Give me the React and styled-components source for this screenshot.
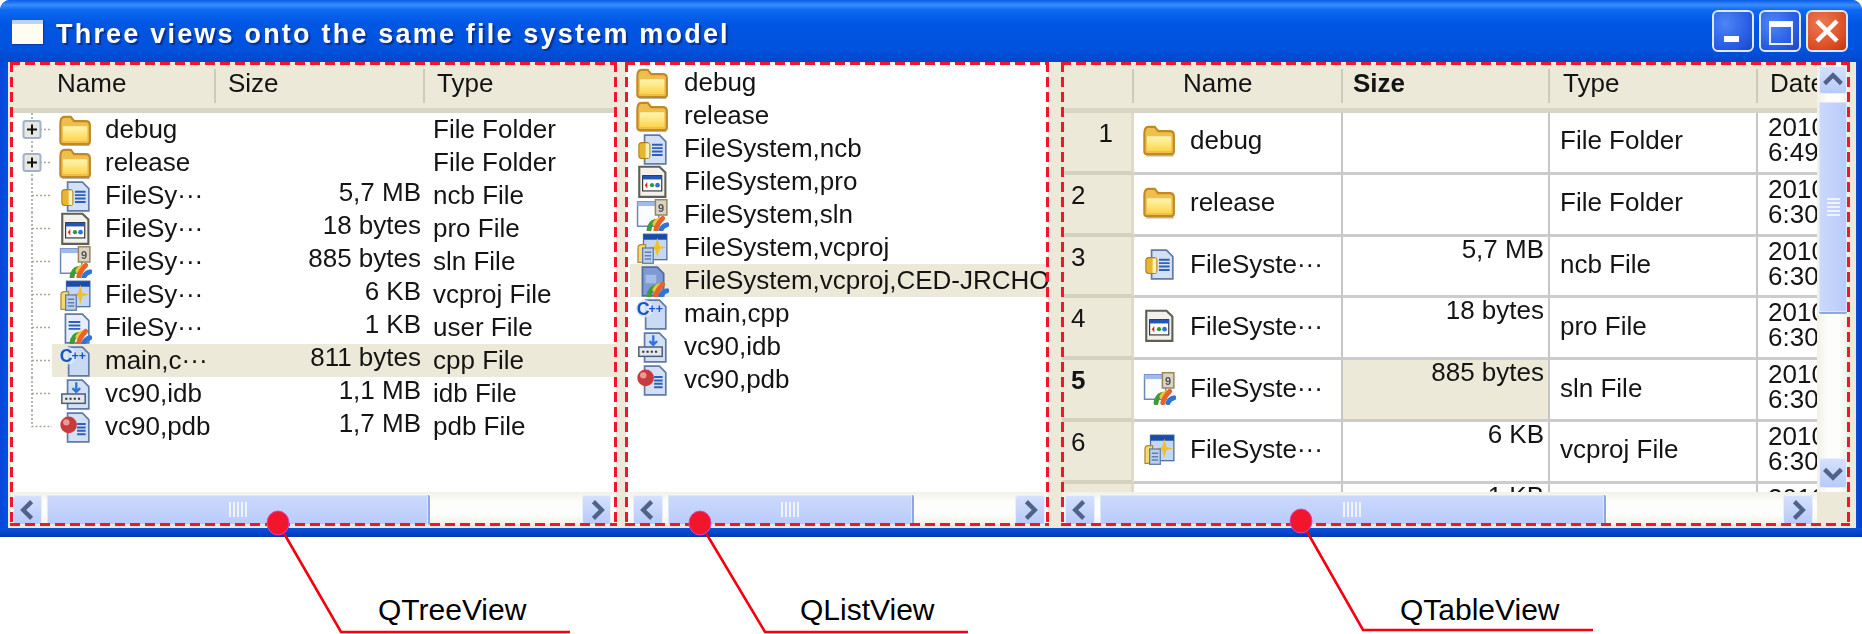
import React from "react"
import styled, { createGlobalStyle } from "styled-components"

const GlobalStyle = createGlobalStyle`
  html, body {
    margin: 0;
    background: #fff;
    overflow: hidden;
  }
  * {
    box-sizing: border-box;
  }
`

const Page = styled.div`
  position: relative;
  width: 1862px;
  height: 634px;
  font-family: "Liberation Sans", Arial, sans-serif;
  color: #141414;
`

const Window = styled.div`
  height: 537px;
  display: flex;
  flex-direction: column;
  border-radius: 10px 10px 0 0;
  background: linear-gradient(90deg, #0a45d8 0, #0050e6 6px, #0055e5 99.5%, #0a3fc8 100%);
  filter: blur(0.55px);
  overflow: hidden;
`

const TitleBar = styled.div`
  height: 62px;
  flex: none;
  display: flex;
  align-items: center;
  padding: 6px 14px 0 12px;
  background: linear-gradient(
    180deg,
    #0a5ce8 0,
    #3b8dff 5px,
    #0d68f2 10px,
    #0056e2 24px,
    #0052dc 50px,
    #0047cc 62px
  );
`

const WindowIcon = styled.div`
  width: 31px;
  height: 24px;
  margin-top: -4px;
  background: #fffdf2;
  border-top: 4px solid #bcd3f6;
  box-shadow: 1px 1px 1px #0b3ba8;
`

const TitleText = styled.div`
  margin-left: 13px;
  font-size: 27px;
  font-weight: bold;
  letter-spacing: 2.2px;
  color: #fff;
  text-shadow: 2px 2px 1px #0b2f90;
  white-space: nowrap;
`

const Controls = styled.div`
  margin-left: auto;
  margin-top: -6px;
  display: flex;
  gap: 5px;
`

const ControlButton = styled.div`
  width: 42px;
  height: 42px;
  display: flex;
  align-items: center;
  justify-content: center;
  border: 2px solid #dfe8fb;
  border-radius: 6px;
  background: ${({ $danger }) =>
    $danger
      ? "radial-gradient(circle at 35% 30%, #ec7a55, #dd4f26 65%, #bb3410)"
      : "radial-gradient(circle at 30% 30%, #4f85f5, #2a5fe6 60%, #1c45c4)"};
`

const Client = styled.div`
  flex: 1;
  min-height: 0;
  margin: 0 6px 0 8px;
  padding: 1px 0 3px 3px;
  display: flex;
  background: #ece9d8;
`

const WindowBottom = styled.div`
  height: 9px;
  flex: none;
  background: linear-gradient(180deg, #0a52dc, #0038b8);
`

const Pane = styled.section`
  position: relative;
  width: ${({ $width }) => $width}px;
  margin-right: ${({ $gap }) => $gap || 0}px;
  flex: none;
  display: flex;
  flex-direction: column;
  background: #fff;

  &::after {
    content: "";
    position: absolute;
    inset: -1px -1px -1px -1px;
    pointer-events: none;
    --dash: #f4142c 0 10px, transparent 10px 15px;
    background:
      repeating-linear-gradient(90deg, var(--dash)) top / 100% 3px no-repeat,
      repeating-linear-gradient(90deg, var(--dash)) bottom / 100% 3px no-repeat,
      repeating-linear-gradient(180deg, var(--dash)) left / 3px 100% no-repeat,
      repeating-linear-gradient(180deg, var(--dash)) right / 3px 100% no-repeat;
  }
`

const HeaderRow = styled.div`
  height: 50px;
  flex: none;
  display: grid;
  grid-template-columns: ${({ $columns }) => $columns};
  background: #ece9d8;
`

const HeaderCell = styled.div`
  position: relative;
  display: flex;
  align-items: center;
  padding: 0 0 5px ${({ $pad }) => $pad}px;
  font-size: 26px;
  font-weight: ${({ $bold }) => ($bold ? "bold" : "normal")};
  white-space: nowrap;
  overflow: hidden;
  border-bottom: 5px solid #d9d5c4;

  &::after {
    content: "";
    position: absolute;
    right: 0;
    top: 6px;
    bottom: 5px;
    width: 2px;
    background: ${({ $last }) => ($last ? "transparent" : "#cfcbbb")};
  }
`

const ScrollArea = styled.div`
  flex: 1;
  min-height: 0;
  overflow: hidden;
`

const TreeRowLine = styled.div`
  height: 33px;
  display: flex;
`

const Gutter = styled.svg`
  width: 41px;
  height: 33px;
  flex: none;
`

const TreeCells = styled.div`
  flex: 1;
  display: grid;
  grid-template-columns: 164px 209px 1fr;
  background: ${({ $selected }) => ($selected ? "#ece9d8" : "transparent")};
`

const NameCell = styled.div`
  display: flex;
  align-items: center;
  gap: ${({ $gap }) => $gap}px;
  padding-left: ${({ $pad }) => $pad}px;
  font-size: 26px;
  white-space: nowrap;
  overflow: hidden;
  background: ${({ $selected }) => ($selected ? "#ece9d8" : "transparent")};
`

const TreeSize = styled.div`
  font-size: 26px;
  line-height: 26px;
  padding-right: 4px;
  text-align: right;
  white-space: nowrap;
`

const TreeType = styled.div`
  display: flex;
  align-items: center;
  padding-left: 8px;
  font-size: 26px;
  white-space: nowrap;
`

const IconBox = styled.svg`
  width: 34px;
  height: 34px;
  flex: none;
`

const HBar = styled.div`
  height: 33px;
  flex: ${({ $grow }) => ($grow ? 1 : "none")};
  display: flex;
  align-items: center;
  padding: 2px ${({ $right }) => $right}px 0 ${({ $left }) => $left}px;
  background: linear-gradient(180deg, #f2f1e8 0, #fdfdfb 30%, #fdfdfb 70%, #efeee4 100%);
`

const ArrowButton = styled.div`
  width: ${({ $size }) => $size}px;
  height: ${({ $length }) => $length || 30}px;
  flex: none;
  display: flex;
  align-items: center;
  justify-content: center;
  border-radius: 3px;
  background: linear-gradient(180deg, #d6e1fd, #b6c9f9);
  box-shadow: inset 0 0 0 1px #e8effe;
`

const HThumb = styled.div`
  width: ${({ $width }) => $width}px;
  height: 30px;
  margin-left: 5px;
  flex: none;
  display: flex;
  align-items: center;
  justify-content: center;
  gap: 2px;
  border-radius: 2px;
  border-right: 2px solid #8aa7e8;
  background: linear-gradient(180deg, #cbd9fc, #b9cbfa);
  box-shadow: inset 0 0 0 1px #dce6fd;
`

const HGrip = styled.i`
  width: 2px;
  height: 15px;
  background: #eef3fe;
`

const Spacer = styled.div`
  flex: 1;
`

const ListBody = styled.div`
  flex: 1;
  min-height: 0;
  padding: 3px 0 0 4px;
  overflow: hidden;
`

const ListRow = styled.div`
  height: 33px;
  display: flex;
  overflow: hidden;
  background: ${({ $selected }) => ($selected ? "#ece9d8" : "transparent")};
`

const TableTop = styled.div`
  flex: 1;
  min-height: 0;
  display: flex;
`

const TableViewport = styled.div`
  flex: 1;
  min-width: 0;
  overflow: hidden;
`

const TABLE_COLUMNS = "72px 209px 207px 208px 220px"

const TableRow = styled.div`
  height: 61.8px;
  display: grid;
  grid-template-columns: ${TABLE_COLUMNS};
`

const RowHead = styled.div`
  position: relative;
  padding: 5px 18px 0 9px;
  font-size: 26px;
  line-height: 30px;
  font-weight: ${({ $bold }) => ($bold ? "bold" : "normal")};
  text-align: ${({ $alignEnd }) => ($alignEnd ? "right" : "left")};
  background: #ece9d8;
  border-bottom: 4px solid #d5d1bf;
  border-right: 3px solid #dedbca;
`

const TableCell = styled.div`
  display: flex;
  align-items: ${({ $top }) => ($top ? "flex-start" : "center")};
  justify-content: ${({ $end }) => ($end ? "flex-end" : "flex-start")};
  padding: 0 ${({ $end }) => ($end ? 4 : 0)}px ${({ $top }) => ($top ? 0 : 4)}px ${({ $pad }) => $pad || 0}px;
  font-size: 26px;
  line-height: ${({ $top }) => ($top ? "24px" : "30px")};
  white-space: nowrap;
  overflow: hidden;
  background: ${({ $selected }) => ($selected ? "#ece9d8" : "#fff")};
  border-right: 2px solid #c6c6c6;
  border-bottom: 3px solid #cccccc;
`

const DateCell = styled.div`
  padding: 2px 0 0 10px;
  font-size: 26px;
  line-height: 25px;
  background: #fff;
  border-bottom: 3px solid #cccccc;
`

const VBar = styled.div`
  width: 32px;
  flex: none;
  display: flex;
  flex-direction: column;
  align-items: center;
  padding: 3px 0 4px;
  background: linear-gradient(90deg, #f2f1e8 0, #fdfdfb 35%, #fdfdfb 70%, #efeee4 100%);
`

const VThumb = styled.div`
  width: 28px;
  height: 212px;
  margin-top: 8px;
  flex: none;
  display: flex;
  flex-direction: column;
  align-items: center;
  justify-content: center;
  gap: 2px;
  border-bottom: 2px solid #8aa7e8;
  border-radius: 2px;
  background: linear-gradient(90deg, #cbd9fc, #b9cbfa);
  box-shadow: inset 0 0 0 1px #dce6fd;
`

const VGrip = styled.i`
  width: 13px;
  height: 2px;
  background: #eef3fe;
`

const TableBottom = styled.div`
  flex: none;
  display: flex;
`

const Corner = styled.div`
  width: 32px;
  background: #ece9d8;
`

const CalloutLabels = styled.div`
  height: 97px;
  display: grid;
  grid-template-columns: 422px 600px auto;
  padding: 53px 0 0 378px;
  font-size: 30px;
  line-height: 40px;
  color: #000;
`

const CalloutLines = styled.svg`
  position: absolute;
  inset: 0;
  width: 1862px;
  height: 634px;
  pointer-events: none;
`

const Swirl = () => (
  <g fill="none" strokeWidth="2.3" strokeLinecap="round">
    <path d="M6.6 15 Q7 11.6 9.6 11" stroke="#3f9a3c" />
    <path d="M9.4 12 Q10.4 10.4 12 10.2" stroke="#f2c230" />
    <path d="M9.8 15 Q10.2 12.6 13 9.6" stroke="#e8622a" />
    <path d="M12.2 15 Q13 13 15 12.6" stroke="#2f74d8" />
  </g>
)

const Page16 = ({ x = 4.5, fill = "#d3e0f5" }) => (
  <path
    d={`M${x} 1.5 H11.5 L14.5 4.5 V15 H${x}Z`}
    fill={fill}
    stroke="#5f7ba6"
    strokeWidth="0.8"
  />
)

const DocLines = ({ x = 8, y = 6, width = 5, count = 4 }) => (
  <g stroke="#2f5fb8" strokeWidth="0.9">
    {Array.from({ length: count }, (_, i) => (
      <path key={i} d={`M${x} ${y + i * 1.6} h${width}`} />
    ))}
  </g>
)

const iconArt = {
  folder: (
    <>
      <defs>
        <linearGradient id="folderFill" x1="0" y1="0" x2="0" y2="1">
          <stop offset="0" stopColor="#fff6b4" />
          <stop offset="1" stopColor="#fdd54c" />
        </linearGradient>
      </defs>
      <path
        d="M1.1 5 Q1.1 1.8 3 1.8 H6 L7.6 3.8 H13 Q15 3.8 15 5.8 V13.4 Q15 14.6 13.8 14.6 H2.3 Q1.1 14.6 1.1 13.4Z"
        fill="#f0be4c"
        stroke="#bd8a26"
        strokeWidth="1"
      />
      <rect x="2.3" y="6.2" width="11.5" height="7" rx="0.6" fill="url(#folderFill)" />
      <path d="M2 15.4 H14.8" stroke="#b9b3a0" strokeWidth="0.7" />
    </>
  ),
  ncb: (
    <>
      <Page16 />
      <DocLines />
      <rect x="1.8" y="5" width="5.2" height="7.5" rx="1.4" fill="#e9b52e" stroke="#a8802a" strokeWidth="0.5" />
      <rect x="5" y="5.4" width="1.7" height="6.8" fill="#fff2b8" />
    </>
  ),
  pro: (
    <>
      <path d="M2 0.8 H11.5 L14.3 3.5 V15 H2Z" fill="#f3f1ea" stroke="#5f5f5a" strokeWidth="1" />
      <rect x="3.6" y="5" width="9" height="7.2" fill="#fff" stroke="#222" strokeWidth="0.5" />
      <rect x="3.6" y="5" width="9" height="1.8" fill="#2456b8" />
      <path d="M5.8 8 L4.6 9.5 L5.8 11Z" fill="#d8202a" />
      <circle cx="8" cy="9.5" r="1" fill="#2a9a3a" />
      <circle cx="10.6" cy="9.5" r="1.1" fill="#2f74d8" />
    </>
  ),
  sln: (
    <>
      <rect x="1.2" y="1.8" width="10" height="11.5" fill="#fbfcff" stroke="#6f88b2" strokeWidth="0.7" />
      <rect x="1.2" y="1.8" width="10" height="2" fill="#9dbbec" />
      <rect x="9.6" y="0.8" width="5.4" height="7.2" fill="#d8d4c8" stroke="#9a8458" strokeWidth="0.7" />
      <text x="12.3" y="6.4" fontSize="5.2" fontWeight="bold" textAnchor="middle" fill="#55524a">9</text>
      <Swirl />
    </>
  ),
  vcproj: (
    <>
      <rect x="4" y="1.5" width="11" height="12" fill="#c4d8f4" stroke="#4f6c9c" strokeWidth="0.6" />
      <rect x="4" y="1.5" width="11" height="2.6" fill="#1a4cab" />
      <path d="M10.5 3 L11.5 7 L14.8 7.8 L11.5 8.6 L10.5 12.2 L9.5 8.6 L6.6 7.8 L9.5 7Z" fill="#f0bf2c" />
      <path d="M1.4 8 Q1.4 6.4 3 6.4 H5 V14.8 H1.4Z" fill="#f3d878" stroke="#b08a30" strokeWidth="0.6" />
      <rect x="3.6" y="8" width="5" height="7.2" fill="#bcd0ec" stroke="#5f7ca8" strokeWidth="0.6" />
      <path d="M4.6 10 h3 M4.6 11.6 h3 M4.6 13.2 h3" stroke="#5f7fb4" strokeWidth="0.7" />
    </>
  ),
  user: (
    <>
      <Page16 x={3.5} fill="#e8eef9" />
      <DocLines x={5} y={5.2} width={5.5} count={3} />
      <Swirl />
    </>
  ),
  ced: (
    <>
      <path d="M3.5 1.5 H10.5 L13.5 4.5 V15 H3.5Z" fill="#7d9ad2" stroke="#506c9e" strokeWidth="0.8" />
      <path d="M5 5 h5 v4 h-5z" fill="#a5bce6" />
      <Swirl />
    </>
  ),
  cpp: (
    <>
      <Page16 x={5} fill="#c9daf4" />
      <circle cx="4.5" cy="5.5" r="4.2" fill="#dfe7f5" opacity="0.85" />
      <text x="0.8" y="8.7" fontSize="8.4" fontWeight="bold" fill="#1557c4">C</text>
      <text x="6.4" y="7.6" fontSize="5.8" fontWeight="bold" fill="#1557c4">++</text>
    </>
  ),
  idb: (
    <>
      <Page16 />
      <path d="M8.6 2.5 V6.8 M6.8 5.2 L8.6 7 L10.4 5.2" stroke="#2f74d8" strokeWidth="1.1" fill="none" />
      <rect x="1.8" y="8" width="11" height="4.4" fill="#e4e8ee" stroke="#4c5c74" strokeWidth="0.7" />
      <path d="M3.4 10.2 h8" stroke="#333" strokeWidth="0.9" strokeDasharray="1 1" />
    </>
  ),
  pdb: (
    <>
      <Page16 />
      <DocLines x={9} y={6.6} width={4} />
      <circle cx="5" cy="7" r="3.9" fill="#c83a3e" />
      <circle cx="3.9" cy="5.8" r="1.5" fill="#ec9a94" />
    </>
  ),
}

const FileIcon = ({ kind }) => <IconBox viewBox="0 0 16 16">{iconArt[kind]}</IconBox>

const Branch = ({ expandable, last }) => (
  <Gutter viewBox="0 0 41 33">
    <path
      d={last ? "M21 0 V16.5 H41" : "M21 0 V33 M21 16.5 H41"}
      fill="none"
      stroke="#a9a698"
      strokeWidth="1.6"
      strokeDasharray="2 2"
    />
    {expandable && (
      <>
        <rect x="12.5" y="8" width="17" height="17" rx="2" fill="#e8e8e2" stroke="#9fb3cc" strokeWidth="2" />
        <path d="M16 16.5 H26 M21 11.5 V21.5" stroke="#111" strokeWidth="2" />
      </>
    )}
  </Gutter>
)

const Chevron = ({ dir }) => {
  const paths = {
    left: "M13 3 L6 10 L13 17",
    right: "M7 3 L14 10 L7 17",
    up: "M3 13 L10 6 L17 13",
    down: "M3 7 L10 14 L17 7",
  }
  return (
    <svg width="24" height="24" viewBox="0 0 20 20">
      <path d={paths[dir]} fill="none" stroke="#4f6288" strokeWidth="3.6" />
    </svg>
  )
}

const HScrollBar = ({ left, right, button, thumb, grow }) => (
  <HBar $left={left} $right={right} $grow={grow}>
    <ArrowButton $size={button}>
      <Chevron dir="left" />
    </ArrowButton>
    <HThumb $width={thumb}>
      {[0, 1, 2, 3, 4].map((i) => (
        <HGrip key={i} />
      ))}
    </HThumb>
    <Spacer />
    <ArrowButton $size={button}>
      <Chevron dir="right" />
    </ArrowButton>
  </HBar>
)

const treeRows = [
  { kind: "folder", name: "debug", size: "", type: "File Folder", expandable: true },
  { kind: "folder", name: "release", size: "", type: "File Folder", expandable: true },
  { kind: "ncb", name: "FileSy···", size: "5,7 MB", type: "ncb File" },
  { kind: "pro", name: "FileSy···", size: "18 bytes", type: "pro File" },
  { kind: "sln", name: "FileSy···", size: "885 bytes", type: "sln File" },
  { kind: "vcproj", name: "FileSy···", size: "6 KB", type: "vcproj File" },
  { kind: "user", name: "FileSy···", size: "1 KB", type: "user File" },
  { kind: "cpp", name: "main,c···", size: "811 bytes", type: "cpp File", selected: true },
  { kind: "idb", name: "vc90,idb", size: "1,1 MB", type: "idb File" },
  { kind: "pdb", name: "vc90,pdb", size: "1,7 MB", type: "pdb File", last: true },
]

const listRows = [
  { kind: "folder", name: "debug" },
  { kind: "folder", name: "release" },
  { kind: "ncb", name: "FileSystem,ncb" },
  { kind: "pro", name: "FileSystem,pro" },
  { kind: "sln", name: "FileSystem,sln" },
  { kind: "vcproj", name: "FileSystem,vcproj" },
  { kind: "ced", name: "FileSystem,vcproj,CED-JRCHO", selected: true },
  { kind: "cpp", name: "main,cpp" },
  { kind: "idb", name: "vc90,idb" },
  { kind: "pdb", name: "vc90,pdb" },
]

const tableRows = [
  { kind: "folder", name: "debug", size: "", type: "File Folder", time: "6:49" },
  { kind: "folder", name: "release", size: "", type: "File Folder", time: "6:30" },
  { kind: "ncb", name: "FileSyste···", size: "5,7 MB", type: "ncb File", time: "6:30" },
  { kind: "pro", name: "FileSyste···", size: "18 bytes", type: "pro File", time: "6:30" },
  { kind: "sln", name: "FileSyste···", size: "885 bytes", type: "sln File", time: "6:30", selected: true },
  { kind: "vcproj", name: "FileSyste···", size: "6 KB", type: "vcproj File", time: "6:30" },
  { kind: "user", name: "FileSyste···", size: "1 KB", type: "user File", time: "6:30" },
]

const TreeView = () => (
  <Pane $width={605} $gap={10}>
    <HeaderRow $columns="205px 209px 1fr">
      <HeaderCell $pad={46}>Name</HeaderCell>
      <HeaderCell $pad={12}>Size</HeaderCell>
      <HeaderCell $pad={12} $last>Type</HeaderCell>
    </HeaderRow>
    <ScrollArea>
      {treeRows.map((row, i) => (
        <TreeRowLine key={i}>
          <Branch expandable={row.expandable} last={row.last} />
          <TreeCells $selected={row.selected}>
            <NameCell $pad={6} $gap={13}>
              <FileIcon kind={row.kind} />
              {row.name}
            </NameCell>
            <TreeSize>{row.size}</TreeSize>
            <TreeType>{row.type}</TreeType>
          </TreeCells>
        </TreeRowLine>
      ))}
    </ScrollArea>
    <HScrollBar left={2} right={5} button={29} thumb={383} />
  </Pane>
)

const ListView = () => (
  <Pane $width={422} $gap={14}>
    <ListBody>
      {listRows.map((row, i) => (
        <ListRow key={i} $selected={row.selected}>
          <NameCell $pad={5} $gap={15} $selected={row.selected}>
            <FileIcon kind={row.kind} />
            {row.name}
          </NameCell>
        </ListRow>
      ))}
    </ListBody>
    <HScrollBar left={7} right={3} button={30} thumb={246} />
  </Pane>
)

const TableView = () => (
  <Pane $width={787}>
    <TableTop>
      <TableViewport>
        <HeaderRow $columns={TABLE_COLUMNS}>
          <HeaderCell />
          <HeaderCell $pad={49}>Name</HeaderCell>
          <HeaderCell $pad={10} $bold>Size</HeaderCell>
          <HeaderCell $pad={13}>Type</HeaderCell>
          <HeaderCell $pad={12} $last>Date Modified</HeaderCell>
        </HeaderRow>
        {tableRows.map((row, i) => (
          <TableRow key={i}>
            <RowHead $alignEnd={i === 0} $bold={row.selected}>{i + 1}</RowHead>
            <TableCell $pad={8}>
              <NameCell $pad={0} $gap={14}>
                <FileIcon kind={row.kind} />
                {row.name}
              </NameCell>
            </TableCell>
            <TableCell $top $end $selected={row.selected}>{row.size}</TableCell>
            <TableCell $pad={10}>{row.type}</TableCell>
            <DateCell>
              2010-03-15
              <br />
              {row.time}
            </DateCell>
          </TableRow>
        ))}
      </TableViewport>
      <VBar>
        <ArrowButton $size={28} $length={28}>
          <Chevron dir="up" />
        </ArrowButton>
        <VThumb>
          {[0, 1, 2, 3, 4].map((i) => (
            <VGrip key={i} />
          ))}
        </VThumb>
        <Spacer />
        <ArrowButton $size={28} $length={30}>
          <Chevron dir="down" />
        </ArrowButton>
      </VBar>
    </TableTop>
    <TableBottom>
      <HScrollBar left={3} right={4} button={30} thumb={506} grow />
      <Corner />
    </TableBottom>
  </Pane>
)

const App = () => (
  <Page>
    <GlobalStyle />
    <Window>
      <TitleBar>
        <WindowIcon />
        <TitleText>Three views onto the same file system model</TitleText>
        <Controls>
          <ControlButton>
            <svg width="30" height="30" viewBox="0 0 30 30">
              <rect x="6" y="20" width="15" height="6" fill="#fff" />
            </svg>
          </ControlButton>
          <ControlButton>
            <svg width="30" height="30" viewBox="0 0 30 30">
              <path d="M5 6 H27 V28 H5Z" fill="none" stroke="#e9f0ff" strokeWidth="2" />
              <rect x="5" y="6" width="22" height="5" fill="#fff" />
            </svg>
          </ControlButton>
          <ControlButton $danger>
            <svg width="30" height="30" viewBox="0 0 30 30">
              <path d="M5 5 L25 25 M25 5 L5 25" stroke="#fff" strokeWidth="4.5" />
            </svg>
          </ControlButton>
        </Controls>
      </TitleBar>
      <Client>
        <TreeView />
        <ListView />
        <TableView />
      </Client>
      <WindowBottom />
    </Window>
    <CalloutLabels>
      <span>QTreeView</span>
      <span>QListView</span>
      <span>QTableView</span>
    </CalloutLabels>
    <CalloutLines viewBox="0 0 1862 634">
      <g fill="none" stroke="#f4000f" strokeWidth="2.6">
        <path d="M278 523 L341 632 H570" />
        <path d="M700 523 L765 632 H968" />
        <path d="M1301 521 L1363 630 H1593" />
      </g>
      <g fill="#f2162c" stroke="#e040c0" strokeWidth="1">
        <ellipse cx="278" cy="523" rx="11" ry="12" />
        <ellipse cx="700" cy="523" rx="11" ry="12" />
        <ellipse cx="1301" cy="521" rx="11" ry="12" />
      </g>
    </CalloutLines>
  </Page>
)

export default App
